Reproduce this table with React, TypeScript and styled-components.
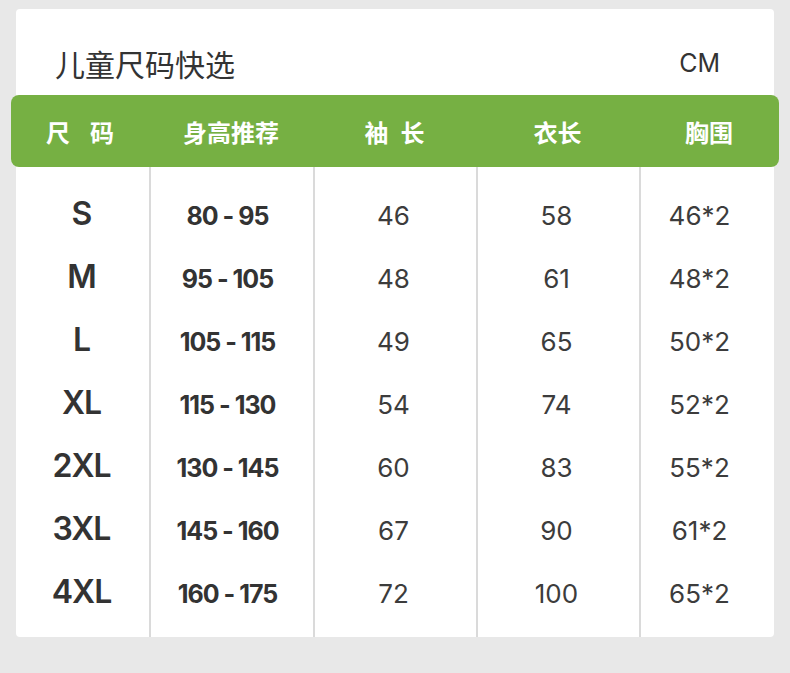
import React from 'react';
import styled, { createGlobalStyle } from 'styled-components';

interface SizeRow {
  size: string;
  height: string;
  sleeve: string;
  length: string;
  chest: string;
}

type Kind = 'size' | 'height' | 'value';

const rows: SizeRow[] = [
  { size: 'S', height: '80 - 95', sleeve: '46', length: '58', chest: '46*2' },
  { size: 'M', height: '95 - 105', sleeve: '48', length: '61', chest: '48*2' },
  { size: 'L', height: '105 - 115', sleeve: '49', length: '65', chest: '50*2' },
  { size: 'XL', height: '115 - 130', sleeve: '54', length: '74', chest: '52*2' },
  { size: '2XL', height: '130 - 145', sleeve: '60', length: '83', chest: '55*2' },
  { size: '3XL', height: '145 - 160', sleeve: '67', length: '90', chest: '61*2' },
  { size: '4XL', height: '160 - 175', sleeve: '72', length: '100', chest: '65*2' },
];

// header labels; gap = space between the characters
const headers = [
  { label: '尺码', gap: 20 },
  { label: '身高推荐', gap: 0 },
  { label: '袖长', gap: 12 },
  { label: '衣长', gap: 0 },
  { label: '胸围', gap: 0 },
];

// drop = top padding so baselines line up, nudge = pulls text left of centre
const columns: { key: keyof SizeRow; kind: Kind; drop: number; nudge: number }[] = [
  { key: 'size', kind: 'size', drop: 15, nudge: 2 },
  { key: 'height', kind: 'height', drop: 18, nudge: 9 },
  { key: 'sleeve', kind: 'value', drop: 17, nudge: 4 },
  { key: 'length', kind: 'value', drop: 17, nudge: 4 },
  { key: 'chest', kind: 'value', drop: 17, nudge: 16 },
];

const GlobalStyle = createGlobalStyle`
  html, body {
    margin: 0;
    background: #e8e8e8;
  }
  body {
    font-family: Inter, "Noto Sans CJK SC", sans-serif;
  }
`;

const Page = styled.div`
  padding: 9px 16px 36px;
`;

const Card = styled.div`
  width: 758px;
  background: #fff;
  border-radius: 4px;
`;

const TitleRow = styled.div`
  display: flex;
  align-items: center;
  justify-content: space-between;
  padding: 39px 54px 17px 39px;
  line-height: 30px;
`;

const Title = styled.h2`
  margin: 0;
  font-family: "Noto Sans CJK SC", sans-serif;
  font-size: 30px;
  font-weight: 400;
  color: #333;
`;

const Unit = styled.span`
  font-family: Inter, sans-serif;
  font-size: 25px;
  color: #333;
`;

const HeaderBar = styled.div`
  display: grid;
  grid-template-columns: 138px 164px 163px 163px 140px;
  height: 72px;
  margin: 0 -5px;
  background: #76b043;
  border-radius: 8px;
`;

const HeaderCell = styled.div<{ $gap: number }>`
  display: flex;
  align-items: center;
  justify-content: center;
  gap: ${(p) => p.$gap}px;
  font-family: "Noto Sans CJK SC", sans-serif;
  font-size: 24px;
  font-weight: 700;
  color: #fff;
`;

const Body = styled.div`
  display: grid;
  grid-template-columns: 133px 164px 163px 163px 135px;
`;

const Column = styled.div<{ $drop: number; $nudge: number; $divider: boolean }>`
  padding: ${(p) => p.$drop}px ${(p) => p.$nudge}px ${(p) => 29 - p.$drop}px 0;
  border-left: ${(p) => (p.$divider ? '2px solid #dadada' : 'none')};
`;

const Cell = styled.div<{ $kind: Kind }>`
  height: 63px;
  line-height: 63px;
  text-align: center;
  white-space: nowrap;
  font-feature-settings: "calt" 0;
  color: ${(p) => (p.$kind === 'value' ? '#3c3c3c' : '#333')};
  font-size: ${(p) => (p.$kind === 'size' ? 32 : p.$kind === 'height' ? 25 : 26)}px;
  font-weight: ${(p) => (p.$kind === 'size' ? 600 : p.$kind === 'height' ? 700 : 400)};
  letter-spacing: ${(p) => (p.$kind === 'value' ? '0' : '-1px')};
`;

const App = () => {
  return (
    <Page>
      <GlobalStyle />
      <Card>
        <TitleRow>
          <Title>儿童尺码快选</Title>
          <Unit>CM</Unit>
        </TitleRow>
        <HeaderBar>
          {headers.map((h) => (
            <HeaderCell key={h.label} $gap={h.gap}>
              {h.label.split('').map((ch, i) => (
                <span key={i}>{ch}</span>
              ))}
            </HeaderCell>
          ))}
        </HeaderBar>
        <Body>
          {columns.map((col, i) => (
            <Column key={col.key} $drop={col.drop} $nudge={col.nudge} $divider={i > 0}>
              {rows.map((r) => (
                <Cell key={r.size} $kind={col.kind}>
                  {r[col.key]}
                </Cell>
              ))}
            </Column>
          ))}
        </Body>
      </Card>
    </Page>
  );
};

export default App;
